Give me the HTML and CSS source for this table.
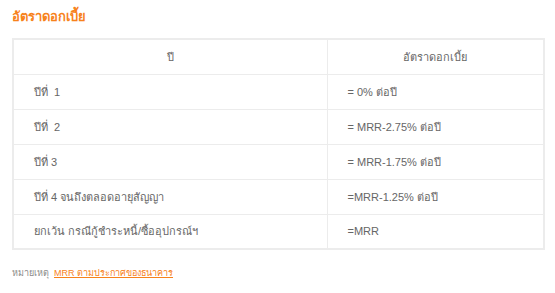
FILE: index.html
```html
<!DOCTYPE html>
<html lang="th">
<head>
<meta charset="utf-8">
<link rel="stylesheet" href="styles.css">
</head>
<body>
<div class="wrap">
  <h2 class="title">อัตราดอกเบี้ย</h2>
  <table class="rates">
    <thead>
      <tr><th>ปี</th><th>อัตราดอกเบี้ย</th></tr>
    </thead>
    <tbody>
      <tr><td>ปีที่&nbsp; 1</td><td>= 0% ต่อปี</td></tr>
      <tr><td>ปีที่&nbsp; 2</td><td>= MRR-2.75% ต่อปี</td></tr>
      <tr><td>ปีที่ 3</td><td>= MRR-1.75% ต่อปี</td></tr>
      <tr><td>ปีที่ 4 จนถึงตลอดอายุสัญญา</td><td>=MRR-1.25% ต่อปี</td></tr>
      <tr><td>ยกเว้น กรณีกู้ชำระหนี้/ซื้ออุปกรณ์ฯ</td><td>=MRR</td></tr>
    </tbody>
  </table>
  <p class="note">หมายเหตุ&nbsp; <a href="#" class="link">MRR ตามประกาศของธนาคาร</a></p>
</div>
</body>
</html>
```
FILE: styles.css
```css
* { box-sizing: border-box; }
body {
  margin: 0;
  background: #fff;
  font-family: "Liberation Sans", Tahoma, "DejaVu Sans", sans-serif;
  color: #666;
}
.wrap {
  padding: 8px 10px 0 12px;
}
.title {
  margin: 0;
  font-size: 13px;
  font-weight: bold;
  color: #f7821b;
  line-height: 18px;
}
.rates {
  margin-top: 12px;
  width: 533px;
  border-collapse: collapse;
  border: 2px solid #ececec;
  font-size: 11px;
}
.rates th, .rates td {
  border: 1px solid #ececec;
  height: 35px;
  padding: 0 0 0 20px;
  text-align: left;
  font-weight: normal;
}
.rates th {
  text-align: center;
  padding: 0;
}
.rates th:first-child, .rates td:first-child { width: 314px; }
.note {
  margin: 16px 0 0;
  font-size: 9px;
  color: #888;
}
.link {
  font-size: 9px;
  color: #f7821b;
}
```
